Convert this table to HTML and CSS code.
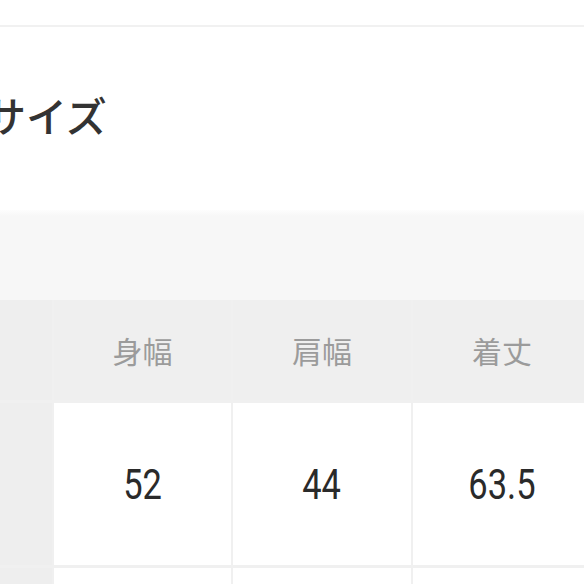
FILE: index.html
```html
<!DOCTYPE html>
<html lang="ja">
<head>
<meta charset="utf-8">
<link rel="stylesheet" href="styles.css">
</head>
<body>
<div class="topbar"></div>
<section class="title-area">
  <h2 class="title">サイズ</h2>
</section>
<div class="band"></div>
<div class="size-table">
  <div class="cell side"></div>
  <div class="cell head">身幅</div>
  <div class="cell head">肩幅</div>
  <div class="cell head">着丈</div>

  <div class="cell side"></div>
  <div class="cell val"><span class="num">52</span></div>
  <div class="cell val"><span class="num">44</span></div>
  <div class="cell val"><span class="num">63.5</span></div>

  <div class="cell side"></div>
  <div class="cell val"></div>
  <div class="cell val"></div>
  <div class="cell val"></div>
</div>
</body>
</html>
```

FILE: styles.css
```css
html, body {
  margin: 0;
  padding: 0;
  background: #ffffff;
  overflow: hidden;
  width: 584px;
  height: 584px;
}

body {
  font-family: "Noto Sans CJK JP", "Noto Sans", sans-serif;
}

.topbar {
  height: 25px;
  border-bottom: 2px solid #f1f1f1;
  background: #ffffff;
}

.title-area {
  height: 183px;
  display: flex;
  align-items: center;
  padding-bottom: 8px;
  box-sizing: border-box;
  overflow: hidden;
}

.title {
  margin: 0 0 0 -15px;
  font-size: 41px;
  font-weight: 500;
  color: #333333;
  line-height: 1;
}

.band {
  height: 90px;
  background: linear-gradient(#fdfdfd 0, #f7f7f7 6px, #f7f7f7 100%);
}

.size-table {
  display: grid;
  width: 600px;
  grid-template-columns: 52px 177px 178px 178px;
  grid-template-rows: 100px 162px 40px;
  column-gap: 2px;
  row-gap: 3px;
  background: #f0f0f0;
}

.cell {
  display: flex;
  align-items: center;
  justify-content: center;
}

.side {
  background: #eeeeee;
}

.head {
  background: #efefef;
  font-size: 30px;
  color: #9b9b9b;
  font-weight: 400;
}

.val {
  background: #ffffff;
  color: #2a2a2a;
}

.num {
  display: inline-block;
  font-family: "Roboto", "Noto Sans", sans-serif;
  font-size: 42px;
  font-weight: 400;
  line-height: 1;
  transform: scaleX(0.82);
  padding-top: 2px;
}
```
